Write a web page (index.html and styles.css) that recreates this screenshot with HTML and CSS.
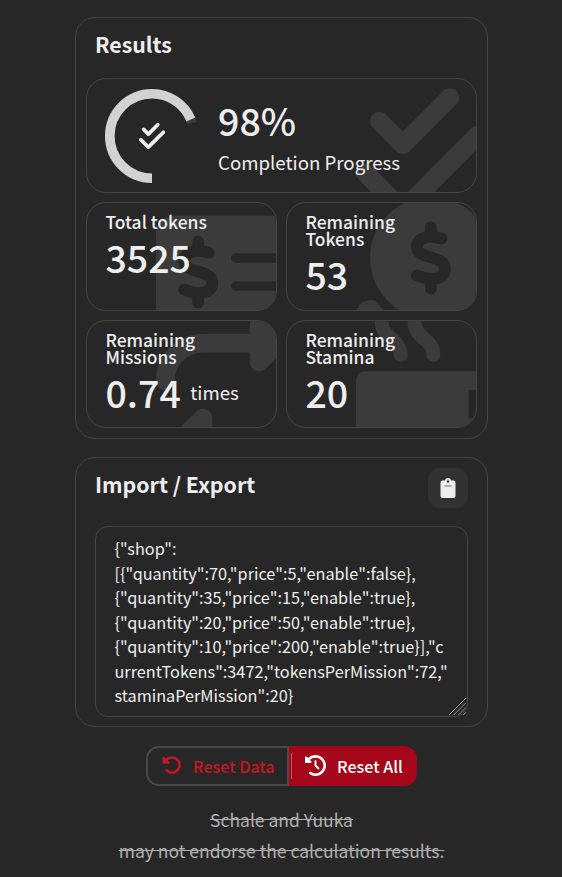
FILE: index.html
```html
<!DOCTYPE html>
<html lang="en">
<head>
<meta charset="utf-8">
<title>Results</title>
<link rel="stylesheet" href="styles.css">
</head>
<body>
<svg class="defs" width="0" height="0">
  <symbol id="check-double" viewBox="0 0 448 512"><path d="M342.6 86.6c12.5-12.5 12.5-32.8 0-45.3s-32.8-12.5-45.3 0L160 178.7l-57.4-57.4c-12.5-12.5-32.8-12.5-45.3 0s-12.5 32.8 0 45.3l80 80c12.5 12.5 32.8 12.5 45.3 0l160-160zm96 128c12.5-12.5 12.5-32.8 0-45.3s-32.8-12.5-45.3 0L160 402.7 54.6 297.4c-12.5-12.5-32.8-12.5-45.3 0s-12.5 32.8 0 45.3l128 128c12.5 12.5 32.8 12.5 45.3 0l256-256z"/></symbol>
</svg>
<main class="page">
  <section class="card results">
    <h2 class="title">Results</h2>
    <div class="tile progress">
      <svg class="bg bg-check" viewBox="0 0 448 512"><use href="#check-double"/></svg>
      <div class="gauge">
        <svg class="ring" viewBox="0 0 94 94">
          <circle class="trail" cx="47" cy="47" r="42.2" pathLength="100" stroke-dasharray="70 100" transform="rotate(90 47 47)"/>
          <circle class="fill" cx="47" cy="47" r="42.2" pathLength="100" stroke-dasharray="68.6 100" transform="rotate(90 47 47)"/>
        </svg>
        <svg class="gauge-icon" viewBox="0 0 448 512"><use href="#check-double"/></svg>
      </div>
      <div class="progress-text">
        <div class="percent">98%</div>
        <div class="caption">Completion Progress</div>
      </div>
    </div>
    <div class="grid">
      <div class="tile stat">
        <svg class="bg bg-wide" viewBox="0 0 576 512"><path d="M64 64C28.7 64 0 92.7 0 128V384c0 35.3 28.7 64 64 64H512c35.3 0 64-28.7 64-64V128c0-35.3-28.7-64-64-64H64zM272 192H496c8.800 0 16 7.200 16 16s-7.200 16-16 16H272c-8.800 0-16-7.200-16-16s7.200-16 16-16zM256 304c0-8.800 7.200-16 16-16H496c8.800 0 16 7.200 16 16s-7.200 16-16 16H272c-8.800 0-16-7.200-16-16zM164 152v13.900c7.500 1.200 14.600 2.900 21.100 4.700c10.700 2.800 17 13.800 14.200 24.500s-13.800 17-24.500 14.200c-11-2.900-21.600-5-31.200-5.200c-7.900-.1-16 1.800-21.500 5c-4.800 2.800-6.200 5.600-6.200 9.300c0 1.800 .1 3.500 5.300 6.700c6.300 3.800 15.500 6.700 28.300 10.500l.7 .2c11.200 3.400 25.600 7.700 37.100 15c12.900 8.100 24.300 21.300 24.600 41.600c.3 20.900-10.500 36.100-24.800 45c-7.200 4.500-15.200 7.300-23.200 9V360c0 11-9 20-20 20s-20-9-20-20V345.400c-10.300-2.200-20-5.500-28.200-8.400c-2.100-.7-4.100-1.400-6.100-2.100c-10.500-3.500-16.100-14.800-12.600-25.300s14.800-16.100 25.300-12.600c2.500 .8 4.900 1.700 7.200 2.400c13.600 4.600 24 8.100 35.100 8.500c8.600 .3 16.500-1.600 21.400-4.700c4.100-2.500 6-5.500 5.900-10.500c0-2.900-.8-5-5.900-8.200c-6.300-4-15.400-6.900-28-10.700l-1.700-.5c-10.900-3.300-24.600-7.400-35.600-14c-12.700-7.700-24.600-20.500-24.700-40.700c-.1-21.100 11.800-35.700 25.800-43.900c6.900-4.100 14.500-6.800 22.200-8.500V152c0-11 9-20 20-20s20 9 20 20z"/></svg>
        <div class="label">Total tokens</div>
        <div class="value">3525</div>
      </div>
      <div class="tile stat">
        <svg class="bg" viewBox="0 0 512 512"><path d="M326.700 403.700c-22.100 8-45.900 12.300-70.700 12.300s-48.700-4.400-70.700-12.300c-.3-.1-.5-.2-.8-.3c-30-11-56.800-28.700-78.600-51.400C70 314.600 48 263.900 48 208C48 93.100 141.100 0 256 0S464 93.100 464 208c0 55.900-22 106.600-57.900 144c-1 1-2 2.100-3 3.100c-21.400 21.400-47.400 38.100-76.300 48.600zM256 84c-11 0-20 9-20 20v14c-7.600 1.700-15.200 4.400-22.200 8.500c-13.900 8.300-25.900 22.800-25.800 43.900c.1 20.300 12 33.100 24.700 40.700c11 6.600 24.700 10.800 35.600 14l1.700 .5c12.600 3.800 21.800 6.800 28 10.700c5.100 3.200 5.800 5.400 5.900 8.200c.1 5-1.800 8-5.900 10.500c-5 3.100-12.900 5-21.400 4.700c-11.100-.4-21.500-3.900-35.100-8.500c-2.300-.8-4.700-1.600-7.200-2.400c-10.500-3.500-21.800 2.200-25.300 12.600s2.200 21.800 12.600 25.300c1.900 .6 4 1.300 6.100 2.100c8.300 2.900 17.900 6.200 28.200 8.400V312c0 11 9 20 20 20s20-9 20-20V298.200c8-1.700 16-4.500 23.200-9c14.300-8.900 25.100-24.100 24.800-45c-.3-20.300-11.700-33.400-24.600-41.600c-11.500-7.200-25.900-11.600-37.100-15l-.7-.2c-12.800-3.900-21.900-6.700-28.300-10.500c-5.200-3.100-5.300-4.900-5.300-6.700c0-3.700 1.400-6.500 6.200-9.300c5.400-3.200 13.600-5.100 21.500-5c9.600 .1 20.200 2.200 31.200 5.200c10.700 2.800 21.600-3.500 24.500-14.200s-3.500-21.600-14.200-24.500c-6.500-1.700-13.700-3.400-21.100-4.700V104c0-11-9-20-20-20zM48 352H64c19.500 25.900 44 47.700 72.200 64H64v32H448V416H375.800c28.200-16.300 52.800-38.100 72.200-64h16c26.500 0 48 21.500 48 48v64c0 26.500-21.500 48-48 48H48c-26.500 0-48-21.500-48-48V400c0-26.500 21.500-48 48-48z"/></svg>
        <div class="label">Remaining<br>Tokens</div>
        <div class="value">53</div>
      </div>
      <div class="tile stat">
        <svg class="bg" viewBox="0 0 512 512"><path d="M0 224c0 17.700 14.300 32 32 32s32-14.300 32-32c0-53 43-96 96-96H320v32c0 12.900 7.800 24.600 19.800 29.600s25.700 2.200 34.900-6.900l64-64c12.500-12.500 12.500-32.800 0-45.300l-64-64c-9.200-9.200-22.900-11.900-34.900-6.900S320 19.100 320 32V64H160C71.600 64 0 135.600 0 224zm512 64c0-17.700-14.300-32-32-32s-32 14.300-32 32c0 53-43 96-96 96H192V352c0-12.900-7.800-24.600-19.800-29.600s-25.700-2.200-34.900 6.900l-64 64c-12.500 12.500-12.500 32.800 0 45.300l64 64c9.200 9.200 22.900 11.900 34.900 6.900s19.800-16.600 19.800-29.600V448H352c88.400 0 160-71.600 160-160z"/></svg>
        <div class="label">Remaining<br>Missions</div>
        <div class="value">0.74<span class="unit">times</span></div>
      </div>
      <div class="tile stat">
        <svg class="bg" viewBox="0 0 512 512"><path d="M88 0C74.700 0 64 10.700 64 24c0 38.900 23.400 59.400 39.100 73.100l1.100 1C120.500 112.300 128 119.900 128 136c0 13.300 10.700 24 24 24s24-10.700 24-24c0-38.900-23.400-59.400-39.100-73.100l-1.100-1C119.500 47.700 112 40.100 112 24c0-13.300-10.700-24-24-24zM32 192c-17.700 0-32 14.300-32 32V416c0 53 43 96 96 96H288c53 0 96-43 96-96h16c61.900 0 112-50.100 112-112s-50.100-112-112-112H352 32zm352 64h16c26.500 0 48 21.500 48 48s-21.500 48-48 48H384V256zM224 24c0-13.300-10.700-24-24-24s-24 10.700-24 24c0 38.900 23.400 59.400 39.100 73.100l1.100 1C232.500 112.300 240 119.900 240 136c0 13.300 10.700 24 24 24s24-10.700 24-24c0-38.900-23.400-59.400-39.100-73.100l-1.100-1C231.500 47.700 224 40.100 224 24z"/></svg>
        <div class="label">Remaining<br>Stamina</div>
        <div class="value">20</div>
      </div>
    </div>
  </section>

  <section class="card transfer">
    <div class="transfer-head">
      <h2 class="title">Import / Export</h2>
      <button class="paste" aria-label="Paste">
        <svg viewBox="0 0 16 20" width="16" height="20"><path class="board" d="M2.500 2.500H4.800A3.300 3.300 0 0 1 11.200 2.500H13.500A2 2 0 0 1 15.500 4.500V18A2 2 0 0 1 13.500 20H2.500A2 2 0 0 1 .5 18V4.500A2 2 0 0 1 2.500 2.500Z"/><circle class="hole" cx="8" cy="3.500" r="1.200"/><path class="rule" d="M4.500 8H11.500"/></svg>
      </button>
    </div>
    <div class="box">
      <div class="json">{"shop":<br>[{"quantity":70,"price":5,"enable":false},<br>{"quantity":35,"price":15,"enable":true},<br>{"quantity":20,"price":50,"enable":true},<br>{"quantity":10,"price":200,"enable":true}],"c<br>urrentTokens":3472,"tokensPerMission":72,"<br>staminaPerMission":20}</div>
      <svg class="grip" viewBox="0 0 18 18"><path d="M0 18L18 0M5 18L18 5M10 18L18 10M15 18L18 15"/></svg>
    </div>
  </section>

  <div class="actions">
    <button class="btn reset-data"><svg viewBox="0 0 512 512" width="20" height="20"><path d="M48.500 224H40c-13.300 0-24-10.700-24-24V72c0-9.700 5.800-18.500 14.800-22.200s19.300-1.700 26.200 5.200L98.600 96.600c87.600-86.500 228.700-86.200 315.800 1c87.500 87.500 87.500 229.300 0 316.800s-229.300 87.500-316.800 0c-12.500-12.500-12.500-32.800 0-45.300s32.800-12.500 45.300 0c62.500 62.500 163.800 62.500 226.300 0s62.500-163.800 0-226.300c-62.200-62.200-162.700-62.500-225.300-1L185 183c6.900 6.900 8.900 17.200 5.200 26.200s-12.500 14.800-22.200 14.800H48.500z"/></svg><span>Reset Data</span></button>
    <button class="btn reset-all"><svg viewBox="0 0 512 512" width="21" height="21"><path d="M75 75L41 41C25.900 25.900 0 36.600 0 57.900V168c0 13.300 10.700 24 24 24H134.100c21.400 0 32.100-25.900 17-41l-30.800-30.800C155 85.500 203 64 256 64c106 0 192 86 192 192s-86 192-192 192c-40.800 0-78.600-12.700-109.700-34.400c-14.500-10.100-34.400-6.600-44.600 7.900s-6.600 34.400 7.900 44.600C151.200 495 201.700 512 256 512c141.400 0 256-114.600 256-256S397.400 0 256 0C185.300 0 121.300 28.700 75 75zm181 53c-13.300 0-24 10.700-24 24V256c0 6.400 2.500 12.500 7 17l72 72c9.400 9.400 24.600 9.400 33.900 0s9.400-24.600 0-33.900l-65-65V152c0-13.300-10.700-24-24-24z"/></svg><span>Reset All</span></button>
  </div>
  <p class="note">Schale and Yuuka<br>may not endorse the calculation results.</p>
</main>
</body>
</html>
```
FILE: styles.css
```css
* { box-sizing: border-box; }
body {
  margin: 0;
  background: #272727;
  color: #eee;
  font-family: "Noto Sans CJK JP", "Noto Sans", sans-serif;
  height: 877px;
  overflow: hidden;
}
.defs { position: absolute; }
.page { width: 413px; margin: 17px 0 0 75px; }
.card { border: 1px solid #444; border-radius: 20px; }
.results { height: 422px; padding: 0 10px 10px; }
.title { margin: 0; padding-left: 9px; font-size: 21.300px; font-weight: 700; line-height: 32px; }
.results .title { height: 60px; padding-top: 10px; }
.tile { position: relative; border: 1px solid #444; border-radius: 20px; overflow: hidden; }
.progress { height: 115px; display: flex; padding: 10px 18px; }
.bg { position: absolute; right: -30.400px; top: -6.300px; width: 150px; height: 150px; fill: #3b3b3b; }
.bg-wide { width: 168.750px; right: -48.750px; }
.bg-check { width: 131.250px; right: -11.700px; top: -.3px; }
.gauge { display: grid; place-items: center; width: 94px; height: 94px; }
.gauge > svg { grid-area: 1 / 1; }
.ring { width: 94px; height: 94px; fill: none; stroke-width: 9.600px; }
.trail { stroke: #3b3b3b; }
.fill { stroke: #d2d2d2; }
.gauge-icon { width: 26.250px; height: 30px; fill: #eee; }
.progress-text { position: relative; margin-left: 19px; }
.percent { font-size: 37.600px; line-height: 60px; height: 60px; margin-top: 1px; font-weight: 500; }
.caption { font-size: 18.670px; line-height: 30px; margin-top: -3px; }
.grid { display: grid; grid-template-columns: 1fr 1fr; grid-template-rows: 109px 108px; gap: 9px; margin-top: 9px; }
.stat { padding: 10px 18.500px; }
.label { position: relative; font-size: 17.450px; line-height: 17px; font-weight: 500; }
.value { position: relative; font-size: 37.500px; line-height: 40px; font-weight: 500; margin-top: 7px; display: flex; }
.unit { font-size: 18.670px; font-weight: 400; margin-left: 9.500px; }
.transfer { margin-top: 18px; height: 270px; padding: 10px 19px; }
.transfer-head { display: flex; justify-content: space-between; height: 58px; }
.transfer .title { padding: 0; }
.paste { width: 40px; height: 40px; border: 0; border-radius: 12px; background: #323232; padding: 0; display: grid; place-items: center; }
.board { fill: #eee; }
.hole { fill: #323232; }
.rule { stroke: #777; stroke-width: 1; }
.box { position: relative; height: 191px; border: 1px solid #444; border-radius: 13px; padding: 9px 18.500px; }
.json { font-size: 16.250px; line-height: 24.500px; white-space: nowrap; }
.grip { position: absolute; right: 1px; bottom: 1px; width: 17px; height: 17px; stroke: #999; stroke-width: 1; fill: none; }
.actions { display: flex; margin: 19px 0 0 71px; height: 40px; }
.btn { display: flex; align-items: center; font: 500 16.100px/24px "Noto Sans CJK JP", "Noto Sans", sans-serif; border: 0; padding: 0; }
.btn svg { position: relative; top: -1px; }
.reset-data { width: 143px; border: 2px solid #494949; border-radius: 13px 0 0 13px; background: transparent; color: #c81623; fill: #c81623; padding-left: 14px; gap: 11px; }
.reset-all { width: 128px; border-radius: 0 13px 13px 0; background: #a50619; color: #fff; fill: #fff; padding-left: 2px; gap: 11px; }
.reset-all::before { content: ""; width: 1px; height: 26px; margin-right: 2px; background: #e0485a; }
.note { margin: 18px 0 0; text-align: center; color: #b0b0b0; font-size: 17.500px; line-height: 31px; text-decoration: line-through; }
```
